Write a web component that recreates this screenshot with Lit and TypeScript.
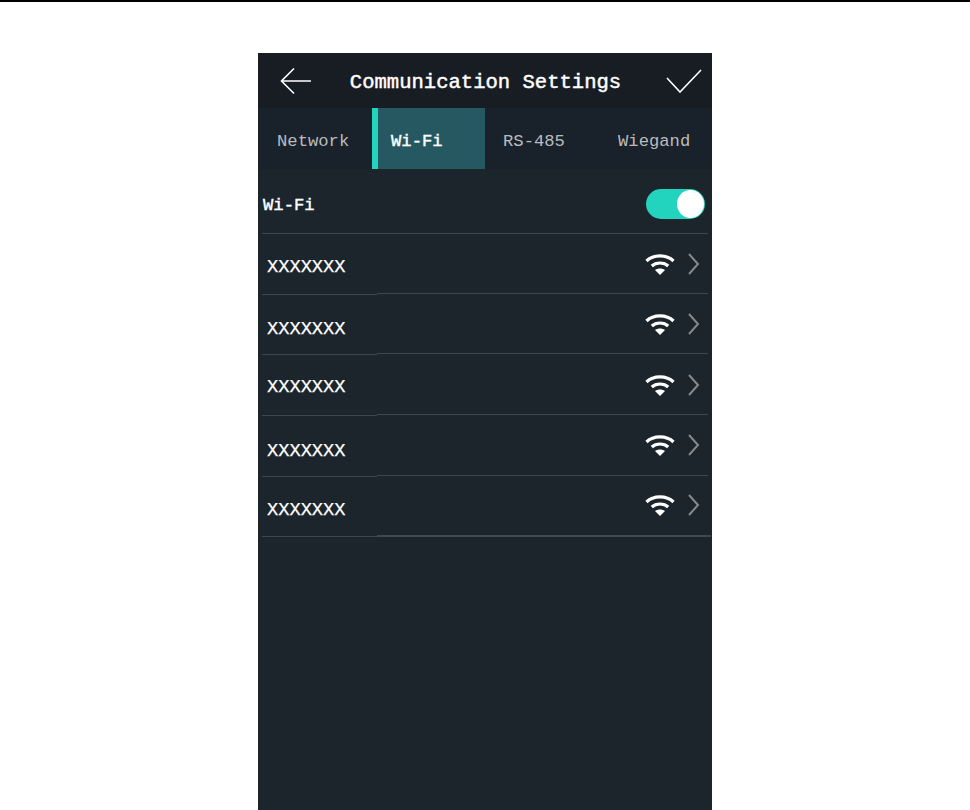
import { LitElement, html, css, svg } from "lit";
import { customElement } from "lit/decorators.js";

const TABS = ["Network", "Wi-Fi", "RS-485", "Wiegand"];
// Each network row: row height, nudge of the label and of the icons (as measured).
const ROWS = [
  { h: 59, textTop: 23, iconTop: 19 },
  { h: 58, textTop: 24, iconTop: 18 },
  { h: 59, textTop: 22, iconTop: 19 },
  { h: 59, textTop: 25, iconTop: 18 },
  { h: 58, textTop: 23, iconTop: 17 },
];

const wifi = svg`<svg class="wifi" width="30" height="22" viewBox="0 0 30 22" fill="none" stroke="#fff" stroke-width="3.2">
  <path d="M1.5 8 C 8.5 1.2 21.5 1.2 28.5 8"/>
  <path d="M6.8 13 C 11 9 19 9 23.2 13"/>
  <path d="M10 17 L15 22 L20 17 C 17 15 13 15 10 17 Z" fill="#fff" stroke="none"/>
</svg>`;

const chevron = svg`<svg class="chev" width="12" height="22" viewBox="0 0 12 22" fill="none" stroke="#85898e" stroke-width="2">
  <path d="M1 1 L10 11 L1 21"/>
</svg>`;

@customElement("app-root")
export class AppRoot extends LitElement {
  static styles = css`
    :host {
      display: block;
      width: 970px;
      height: 810px;
      overflow: hidden;
      background: #fff;
      font-family: "Liberation Mono", "DejaVu Sans Mono", monospace;
    }
    .rule { height: 2px; background: #000; }
    .panel {
      width: 454px;
      height: 757px;
      margin: 51px 0 0 258px;
      background: #1c252c;
      display: flex;
      flex-direction: column;
    }
    .header {
      height: 55px;
      background: #181d24;
      display: flex;
      align-items: center;
      padding: 1px 10px 0 22px;
      box-sizing: border-box;
      color: #fff;
    }
    .title {
      flex: 1;
      text-align: center;
      font-size: 20.55px;
      -webkit-text-stroke: 0.45px #fff;
      padding: 2px 7px 0 0;
    }
    .tabs {
      height: 61px;
      background: #19222a;
      display: flex;
      font-size: 17.2px;
      color: #b9bcbf;
    }
    .tab {
      display: flex;
      align-items: center;
      padding-top: 6px;
      box-sizing: border-box;
    }
    .tab:nth-child(1) { width: 114px; padding-left: 19px; }
    .tab:nth-child(2) {
      width: 113px;
      padding-left: 13px;
      background: #255860;
      border-left: 6px solid #22d3bd;
      color: #fff;
      -webkit-text-stroke: 0.4px #fff;
    }
    .tab:nth-child(3) { width: 115px; padding-left: 18px; }
    .tab:nth-child(4) { width: 112px; padding-left: 18px; }
    .wifi-row {
      height: 64px;
      margin-left: 4px;
      display: flex;
      align-items: center;
      justify-content: space-between;
      padding: 6px 7px 0 1px;
      box-sizing: border-box;
      color: #fff;
      font-size: 17.2px;
      -webkit-text-stroke: 0.4px #fff;
    }
    .wifi-label { padding-top: 2px; }
    .toggle {
      width: 59px;
      height: 30px;
      border-radius: 15px;
      background: #22d3bd;
      display: flex;
      justify-content: flex-end;
      align-items: center;
      padding-right: 1px;
      box-sizing: border-box;
    }
    .knob { width: 27px; height: 28px; border-radius: 50%; background: #fff; }
    .line { height: 1px; margin: 0 4px; background: #3f4551; }
    .row {
      display: flex;
      justify-content: space-between;
      align-items: flex-start;
      color: #fff;
      font-size: 18.7px;
      -webkit-text-stroke: 0.25px #fff;
      padding-left: 9px;
      padding-right: 12px;
      box-sizing: border-box;
    }
    .icons { display: flex; align-items: center; gap: 13px; }
    .wifi, .chev { display: block; }
    .split { display: flex; height: 2px; }
    .split .l { width: 115px; margin-left: 4px; height: 1px; margin-top: 1px; background: #3f4551; }
    .split .r { width: 331px; height: 1px; background: #3f4551; }
    .split.last .r { width: 334px; height: 2px; background: #424852; }
  `;

  render() {
    return html`
      <div class="rule"></div>
      <div class="panel">
        <div class="header">
          <svg width="32" height="28" viewBox="0 0 32 28" fill="none" stroke="#fff" stroke-width="1.6">
            <path d="M31 14 H2 M14 1.5 L1.5 14 L14 26.5"/>
          </svg>
          <div class="title">Communication Settings</div>
          <svg width="36" height="24" viewBox="0 0 36 24" fill="none" stroke="#fff" stroke-width="1.6">
            <path d="M1 9 L14 23 L35 1"/>
          </svg>
        </div>
        <div class="tabs">${TABS.map((t) => html`<div class="tab">${t}</div>`)}</div>
        <div class="wifi-row"><span class="wifi-label">Wi-Fi</span><div class="toggle"><div class="knob"></div></div></div>
        <div class="line"></div>
        ${ROWS.map(
          (r, i) => html`
            <div class="row" style="height:${r.h}px">
              <span style="margin-top:${r.textTop - 1}px">XXXXXXX</span>
              <div class="icons" style="margin-top:${r.iconTop}px">${wifi}${chevron}</div>
            </div>
            <div class="split ${i === ROWS.length - 1 ? "last" : ""}"><div class="l"></div><div class="r"></div></div>
          `
        )}
      </div>
    `;
  }
}
